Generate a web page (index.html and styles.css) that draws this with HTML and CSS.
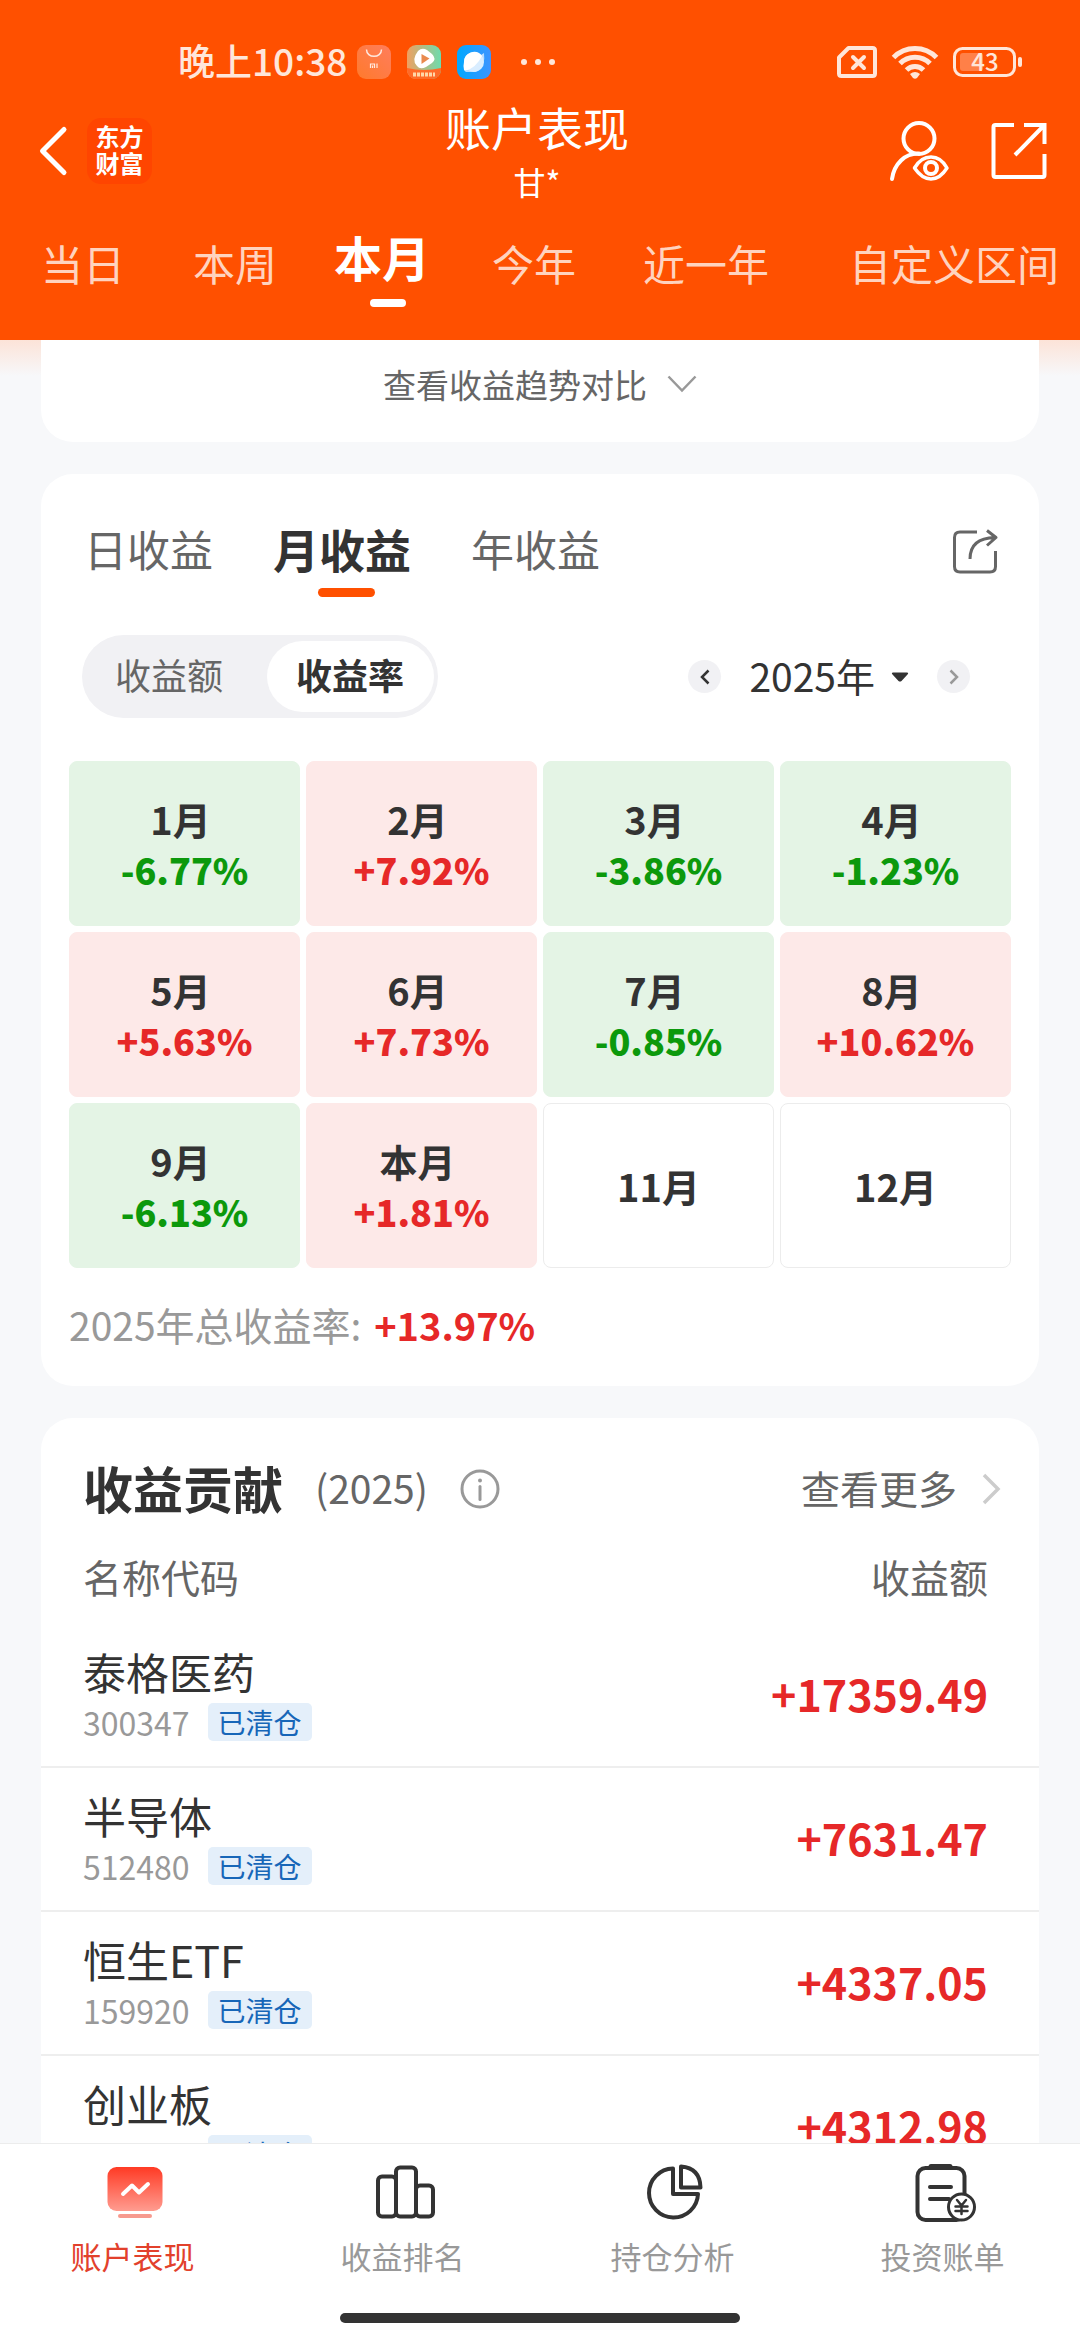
FILE: index.html
```html
<!DOCTYPE html>
<html lang="zh-CN">
<head>
<meta charset="utf-8">
<meta name="viewport" content="width=device-width, initial-scale=1">
<title>账户表现</title>
<link rel="stylesheet" href="styles.css">
</head>
<body>
<header class="header">
  <div class="status">
    <div class="status-side">
      <span class="status-time">晚上10:38</span>
      <svg class="app-icon" viewBox="0 0 34 34" width="34" height="34" aria-hidden="true">
        <defs><linearGradient id="mi" x1="0" y1="1" x2="1" y2="0"><stop offset="0" stop-color="#ff7a2c"/><stop offset="1" stop-color="#ff7d5c"/></linearGradient></defs>
        <rect width="34" height="34" rx="9" fill="url(#mi)"/>
        <path d="M9.500 4.500c0 9 15 9 15 0" fill="none" stroke="#ffe9e0" stroke-width="1.500"/>
        <path d="M13.500 23v-4h4v4M15.500 20.500v2.500M20 18.500v4.500" fill="none" stroke="#ffe9e0" stroke-width="1.200"/>
      </svg>
      <svg class="app-icon" viewBox="0 0 34 34" width="34" height="34" aria-hidden="true">
        <defs><linearGradient id="vid" x1="0" y1="0" x2="1" y2="0"><stop offset="0" stop-color="#f0a060"/><stop offset="1" stop-color="#6cdcae"/></linearGradient>
        <clipPath id="vidc"><rect width="34" height="34" rx="9"/></clipPath></defs>
        <g clip-path="url(#vidc)"><rect width="34" height="34" fill="url(#vid)"/>
        <path d="M0 23q17 4 34 0v11h-34z" fill="#ff6a28"/>
        <path d="M11 6q4-4 9-1l5 4q5 5 0 9l-6 4q-6 3-9-1q-6-6 1-15z" fill="#fff"/>
        <path d="M14.500 9l8 4.500-8 5.500z" fill="#e98a4e"/>
        <path d="M6 29.500h22" stroke="#ffd7a8" stroke-width="4" stroke-dasharray="3 1"/></g>
      </svg>
      <svg class="app-icon" viewBox="0 0 34 34" width="34" height="34" aria-hidden="true">
        <defs><linearGradient id="br" x1="0" y1="0" x2="1" y2="0"><stop offset="0" stop-color="#00a8ff"/><stop offset="1" stop-color="#3d94ff"/></linearGradient></defs>
        <rect width="34" height="34" rx="9" fill="url(#br)"/>
        <path d="M27 8q2 12-8 19l-11 0q10-14 19-19z" fill="#b9dcff"/>
        <circle cx="17" cy="17" r="10" fill="#d9edff"/>
        <path d="M7 25q-1-4 0-8a10 10 0 0 1 18-6q-6 12-17 15z" fill="#fff"/>
      </svg>
      <svg class="dots" viewBox="0 0 34 8" width="34" height="8" aria-hidden="true"><g fill="#ffe6d9"><circle cx="3" cy="4" r="3"/><circle cx="17" cy="4" r="3"/><circle cx="31" cy="4" r="3"/></g></svg>
    </div>
    <div class="status-side">
      <svg viewBox="0 0 40 32" width="40" height="32" aria-hidden="true"><path d="M11.500 2H35.500Q38 2 38 4.500V27.500Q38 30 35.500 30H4.500Q2 30 2 27.500V11.500Z" fill="none" stroke="#ffe6d9" stroke-width="4" stroke-linejoin="round"/><path d="M16 11l11 11M27 11l-11 11" stroke="#ffe6d9" stroke-width="4" stroke-linecap="round"/></svg>
      <svg class="wifi" viewBox="0 0 46 34" width="46" height="34" aria-hidden="true"><g fill="none" stroke="#ffe6d9" stroke-width="5"><path d="M1.500 12.500a30 30 0 0 1 43 0"/><path d="M8 18.500a21 21 0 0 1 30 0"/><path d="M14.500 25a12 12 0 0 1 17 0"/></g><path d="M18 29q5-4 10 0l-3 4q-2 1.500-4 0z" fill="#ffe6d9"/></svg>
      <svg class="battery" viewBox="0 0 70 30" width="70" height="30" aria-hidden="true"><rect x="1.500" y="1.500" width="60" height="27" rx="8" fill="none" stroke="#ffe6d9" stroke-width="3"/><rect x="7" y="6" width="23" height="18" rx="3" fill="#ff8048"/><rect x="65" y="10" width="4" height="10" rx="2" fill="#ffe6d9"/><text class="battery-text" x="32" y="24" text-anchor="middle">43</text></svg>
    </div>
  </div>

  <div class="titlebar">
    <div class="title-left">
      <button class="icon-btn" aria-label="返回"><svg viewBox="0 0 28 48" width="28" height="48"><path d="M25 2.500L3.500 24L25 45.500" fill="none" stroke="#fff" stroke-width="5" stroke-linecap="round" stroke-linejoin="round"/></svg></button>
      <a class="logo" href="#">东方<br>财富</a>
    </div>
    <div class="title-mid">
      <h1 class="title">账户表现</h1>
      <p class="subtitle">甘*</p>
    </div>
    <div class="title-right">
      <button class="icon-btn" aria-label="账户可见性"><svg viewBox="0 0 60 60" width="60" height="60" fill="none" stroke="#fff" stroke-width="4" stroke-linecap="round"><circle cx="30" cy="17.500" r="15.500"/><path d="M3 58C5 43 16 32 30 32.500"/><path d="M25.500 47Q32 36 42 36T58 47Q51 58 42 58T25.500 47Z" stroke-width="3.500" stroke-linejoin="round"/><circle cx="42" cy="47" r="6" stroke-width="4"/></svg></button>
      <button class="icon-btn" aria-label="分享"><svg viewBox="0 0 56 56" width="56" height="56" fill="none" stroke="#fff" stroke-width="4"><path d="M23 2H4.500Q2.500 2 2.500 4V52Q2.500 54 4.500 54H51.500Q53.500 54 53.500 52V31"/><path d="M33 2H53.500V21M53 2.500L24 32"/></svg></button>
    </div>
  </div>

  <nav class="ranges">
    <button class="range">当日</button>
    <button class="range">本周</button>
    <button class="range range-on">本月</button>
    <button class="range">今年</button>
    <button class="range">近一年</button>
    <button class="range">自定义区间</button>
  </nav>
</header>

<main class="content">
  <section class="card trend">
    <button class="trend-btn">查看收益趋势对比
      <svg viewBox="0 0 30 18" width="30" height="18" aria-hidden="true"><path d="M1.500 1.500L15 15.500L28.500 1.500" fill="none" stroke="#999" stroke-width="2.500"/></svg>
    </button>
  </section>

  <section class="card profit">
    <div class="profit-head">
      <button class="ptab">日收益</button>
      <button class="ptab ptab-on">月收益</button>
      <button class="ptab">年收益</button>
      <button class="icon-btn share" aria-label="分享收益"><svg viewBox="0 0 46 46" width="46" height="46" fill="none" stroke="#666" stroke-width="3"><path d="M25 3H8Q2.500 3 2.500 8.500V37.500Q2.500 43 8 43H38Q43.500 43 43.500 37.500V22"/><path d="M18 30Q18 9 43 8.500M35 1.500L44 8.500L35 16.500" stroke-linejoin="round"/></svg></button>
    </div>

    <div class="controls">
      <div class="segment">
        <button class="seg">收益额</button>
        <button class="seg seg-on">收益率</button>
      </div>
      <div class="year">
        <button class="round" aria-label="上一年"><svg viewBox="0 0 10 16" width="10" height="16"><path d="M8.500 1.500L2 8L8.500 14.500" fill="none" stroke="#333" stroke-width="2.500"/></svg></button>
        <button class="year-pick"><span>2025年</span><svg viewBox="0 0 18 10" width="18" height="10" aria-hidden="true"><path d="M2 .5H16Q18 1 16.500 2.500L10.500 9Q9 10 7.500 9L1.500 2.500Q0 1 2 .5Z" fill="#333"/></svg></button>
        <button class="round" aria-label="下一年"><svg viewBox="0 0 10 16" width="10" height="16"><path d="M1.500 1.500L8 8L1.500 14.500" fill="none" stroke="#999" stroke-width="2.500"/></svg></button>
      </div>
    </div>

    <div class="months">
      <div class="month down"><span>1月</span><b>-6.77%</b></div>
      <div class="month up"><span>2月</span><b>+7.92%</b></div>
      <div class="month down"><span>3月</span><b>-3.86%</b></div>
      <div class="month down"><span>4月</span><b>-1.23%</b></div>
      <div class="month up"><span>5月</span><b>+5.63%</b></div>
      <div class="month up"><span>6月</span><b>+7.73%</b></div>
      <div class="month down"><span>7月</span><b>-0.85%</b></div>
      <div class="month up"><span>8月</span><b>+10.62%</b></div>
      <div class="month down"><span>9月</span><b>-6.13%</b></div>
      <div class="month up"><span>本月</span><b>+1.81%</b></div>
      <div class="month"><span>11月</span></div>
      <div class="month"><span>12月</span></div>
    </div>
    <p class="total">2025年总收益率: <b>+13.97%</b></p>
  </section>

  <section class="card contrib">
    <div class="contrib-head">
      <h2 class="contrib-title">收益贡献</h2>
      <span class="contrib-year">(2025)</span>
      <button class="icon-btn" aria-label="说明"><svg viewBox="0 0 40 40" width="40" height="40"><circle cx="20" cy="20" r="18" fill="none" stroke="#999" stroke-width="3"/><circle cx="20" cy="11.500" r="2" fill="#999"/><path d="M20 17.500V30.500" stroke="#999" stroke-width="3" stroke-linecap="round"/></svg></button>
      <a class="more" href="#">查看更多 <svg viewBox="0 0 20 32" width="20" height="32" aria-hidden="true"><path d="M3 2L17 16L3 30" fill="none" stroke="#ccc" stroke-width="3.500"/></svg></a>
    </div>
    <table class="stocks">
      <thead><tr><th>名称代码</th><th class="num">收益额</th></tr></thead>
      <tbody>
        <tr><td><div class="name">泰格医药</div><div class="meta">300347 <span class="tag">已清仓</span></div></td><td class="num amount">+17359.49</td></tr>
        <tr><td><div class="name">半导体</div><div class="meta">512480 <span class="tag">已清仓</span></div></td><td class="num amount">+7631.47</td></tr>
        <tr><td><div class="name">恒生ETF</div><div class="meta">159920 <span class="tag">已清仓</span></div></td><td class="num amount">+4337.05</td></tr>
        <tr><td><div class="name">创业板</div><div class="meta">159915 <span class="tag">已清仓</span></div></td><td class="num amount">+4312.98</td></tr>
      </tbody>
    </table>
  </section>
</main>

<footer class="footer">
  <nav class="tabbar">
    <a class="tab tab-on" href="#">
      <svg viewBox="0 0 64 60" width="64" height="60" aria-hidden="true"><defs><linearGradient id="scr" x1="0" y1="0" x2="0" y2="1"><stop offset="0" stop-color="#ff3a24"/><stop offset="1" stop-color="#ff9c90"/></linearGradient></defs><rect x="4.500" y="4" width="55" height="44" rx="9" fill="url(#scr)"/><rect x="15" y="51" width="34" height="4" rx="2" fill="#f79a8e"/><path d="M20 31L29 22.500L36 29.500L45 21" fill="none" stroke="#fff" stroke-width="4" stroke-linecap="round" stroke-linejoin="round"/></svg>
      <span>账户表现</span>
    </a>
    <a class="tab" href="#">
      <svg viewBox="0 0 64 60" width="64" height="60" aria-hidden="true"><g fill="none" stroke="#333" stroke-width="4"><rect x="5" y="13.500" width="18" height="40" rx="4"/><rect x="23" y="4.500" width="20" height="49" rx="4"/><rect x="43" y="22.500" width="17" height="31" rx="4"/></g></svg>
      <span>收益排名</span>
    </a>
    <a class="tab" href="#">
      <svg viewBox="0 0 64 60" width="64" height="60" aria-hidden="true"><g fill="none" stroke="#333" stroke-width="4" stroke-linejoin="round"><path d="M30 5.500A24.500 24.500 0 1 0 55 31H30Z"/><path d="M38 3.500Q57 5 57.500 24.500H38Z"/></g></svg>
      <span>持仓分析</span>
    </a>
    <a class="tab" href="#">
      <svg viewBox="0 0 64 60" width="64" height="60" aria-hidden="true"><g fill="none" stroke="#333" stroke-width="4" stroke-linecap="round"><rect x="4.500" y="5" width="47" height="52" rx="8"/><path d="M18 3.500H37" stroke-width="5"/><path d="M17 24H38M17 36H36"/></g><circle cx="48.500" cy="44" r="13" fill="#fff" stroke="#333" stroke-width="3"/><path d="M44 37L48.500 42.500L53 37M48.500 42.500V51M42.500 43.500H54.500M42.500 48H54.500" fill="none" stroke="#333" stroke-width="2.500" stroke-linecap="round"/></svg>
      <span>投资账单</span>
    </a>
  </nav>
  <div class="home-bar"></div>
</footer>
</body>
</html>
```
FILE: styles.css
```css
* { box-sizing: border-box; }

body {
  margin: 0;
  height: 100vh;
  display: flex;
  flex-direction: column;
  background: #f7f8fa;
  color: #333;
  font-family: "Noto Sans CJK SC", "Noto Sans", sans-serif;
}

h1, h2, p { margin: 0; font-weight: 400; }
a { color: inherit; text-decoration: none; }
svg { display: block; flex: none; overflow: visible; }
button {
  margin: 0;
  padding: 0;
  border: 0;
  background: none;
  color: inherit;
  font: inherit;
  white-space: nowrap;
}

/* header */
.header { flex: none; background: #ff5000; color: #fff; }

.status {
  display: flex;
  justify-content: space-between;
  padding: 40px 57px 0 178px;
  height: 84px;
}
.status-side { display: flex; align-items: center; }
.status-time { font-size: 37px; line-height: 40px; font-weight: 500; color: #ffe6d9; padding-bottom: 4px; }
.app-icon { margin-left: 16px; }
.status-time + .app-icon { margin-left: 10px; }
.dots { margin-left: 30px; }
.wifi { margin: 0 15px; }
.battery-text { font-size: 24px; font-weight: 500; fill: #ffe6d9; }

.titlebar {
  display: grid;
  grid-template-columns: 1fr auto 1fr;
  align-items: center;
  margin-top: 9px;
  padding: 0 33px 0 39px;
}
.title-left, .title-right { display: flex; align-items: center; }
.title-left { gap: 20px; }
.title-right { justify-content: flex-end; gap: 42px; }
.title-mid { text-align: center; padding: 0 12px 6px 0; }
.title { font-size: 46px; line-height: 66px; }
.subtitle { font-size: 32px; line-height: 44px; }
.logo {
  width: 65px;
  padding: 4px 0 8px;
  border-radius: 14px;
  background: #ff4500;
  font-size: 24px;
  line-height: 27px;
  font-weight: 700;
  text-align: center;
}

.ranges {
  display: grid;
  grid-template-columns: 152fr 141fr 158fr 151fr 206fr 231fr;
  align-items: start;
  justify-items: start;
  padding: 14px 0 33px 41px;
}
.range { font-size: 42px; line-height: 80px; color: #ffd3bf; }
.range-on { font-size: 48px; line-height: 66px; font-weight: 700; color: #fff; }
.range-on::after {
  content: "";
  display: block;
  width: 36px;
  height: 8px;
  margin: 10px 0 0 36px;
  border-radius: 4px;
  background: #fff;
}

/* content */
.content {
  flex: 1;
  min-height: 0;
  overflow-y: auto;
  scrollbar-width: none;
  padding: 0 41px;
  background: linear-gradient(#fce3d8, #f7f8fa 36px);
}
.card { background: #fff; border-radius: 32px; }
.card + .card { margin-top: 32px; }

.trend { border-radius: 0 0 32px 32px; padding: 20px 0 34px; }
.trend-btn {
  display: flex;
  align-items: center;
  justify-content: center;
  gap: 20px;
  width: 100%;
  font-size: 33px;
  line-height: 48px;
  color: #666;
}

.profit { padding: 42px 28px 32px; }
.profit-head { display: flex; align-items: flex-start; gap: 60px; padding: 0 13px 0 15px; }
.ptab { font-size: 43px; line-height: 64px; color: #666; }
.ptab-on { font-size: 46px; font-weight: 700; color: #333; }
.ptab-on::after {
  content: "";
  display: block;
  width: 57px;
  height: 9px;
  margin: 8px 0 0 45px;
  border-radius: 5px;
  background: #ff5000;
}
.share { margin: 13px 0 0 auto; }

.controls {
  display: flex;
  align-items: center;
  justify-content: space-between;
  margin-top: 38px;
  padding: 0 41px 0 13px;
}
.segment { display: flex; padding: 6px 4px; border-radius: 42px; background: #f1f1f4; }
.seg { padding: 0 30px 4px 29px; border-radius: 36px; font-size: 36px; line-height: 67px; color: #666; }
.seg:first-child { padding-right: 44px; }
.seg-on { background: #fff; color: #333; font-weight: 700; }

.year { display: flex; align-items: center; gap: 28px; }
.year-pick { display: flex; align-items: center; gap: 16px; font-size: 39px; line-height: 60px; }
.year-pick span { padding-bottom: 4px; }
.round {
  display: grid;
  place-items: center;
  width: 33px;
  height: 33px;
  border-radius: 50%;
  background: #f1f1f4;
}

.months {
  display: grid;
  grid-template-columns: repeat(4, 1fr);
  grid-auto-rows: 165px;
  gap: 6px;
  margin-top: 43px;
}
.month {
  display: flex;
  flex-direction: column;
  align-items: center;
  justify-content: center;
  border: 1px solid #ececec;
  border-radius: 8px;
  font-size: 36px;
  line-height: 50px;
  font-weight: 700;
}
.month span { font-size: 38px; }
.up span, .down span { padding-right: 8px; }
.month.up { border-color: #fde9e8; background: #fde9e8; }
.month.down { border-color: #e4f4e5; background: #e4f4e5; }
.up b { color: #e62828; }
.down b { color: #0c990c; }

.total { margin-top: 27px; font-size: 39px; line-height: 58px; color: #999; }
.total b { margin-left: 4px; font-size: 38px; color: #e62828; }

.contrib-head { display: flex; align-items: center; padding: 32px 38px 0 42px; line-height: 74px; }
.contrib-head svg { margin-top: 4px; }
.contrib-title { font-size: 50px; font-weight: 700; }
.contrib-year { margin: 0 32px; font-size: 39px; color: #666; }
.more { display: flex; align-items: center; gap: 24px; margin-left: auto; font-size: 39px; color: #666; }

.stocks { width: 100%; border-collapse: collapse; }
.stocks th { padding: 18px 0 14px 42px; font-size: 39px; line-height: 68px; font-weight: 400; text-align: left; color: #666; }
.stocks td { padding: 19px 0 21px 42px; border-bottom: 2px solid #eee; }
.stocks .num { padding-left: 0; padding-right: 51px; text-align: right; }
.name { font-size: 43px; line-height: 56px; }
.meta { display: flex; align-items: center; gap: 18px; font-size: 32px; line-height: 46px; color: #999; }
.tag {
  padding: 0 10px;
  border-radius: 5px;
  background: #e4effa;
  font-size: 28px;
  line-height: 38px;
  color: #1766b8;
}
.stocks .amount { padding-bottom: 24px; font-size: 43px; line-height: 56px; font-weight: 700; color: #e62828; }

/* bottom tabs */
.footer { flex: none; border-top: 1px solid #ececec; background: #fff; padding-bottom: 17px; }
.tabbar { display: grid; grid-template-columns: repeat(4, 1fr); padding-top: 19px; }
.tab {
  display: flex;
  flex-direction: column;
  align-items: center;
  gap: 10px;
  font-size: 31px;
  line-height: 46px;
  color: #999;
}
.tab span { padding-right: 5px; }
.tab-on { color: #e2412c; }
.home-bar { width: 37%; height: 10px; margin: 34px auto 0; border-radius: 5px; background: #333; }
```
